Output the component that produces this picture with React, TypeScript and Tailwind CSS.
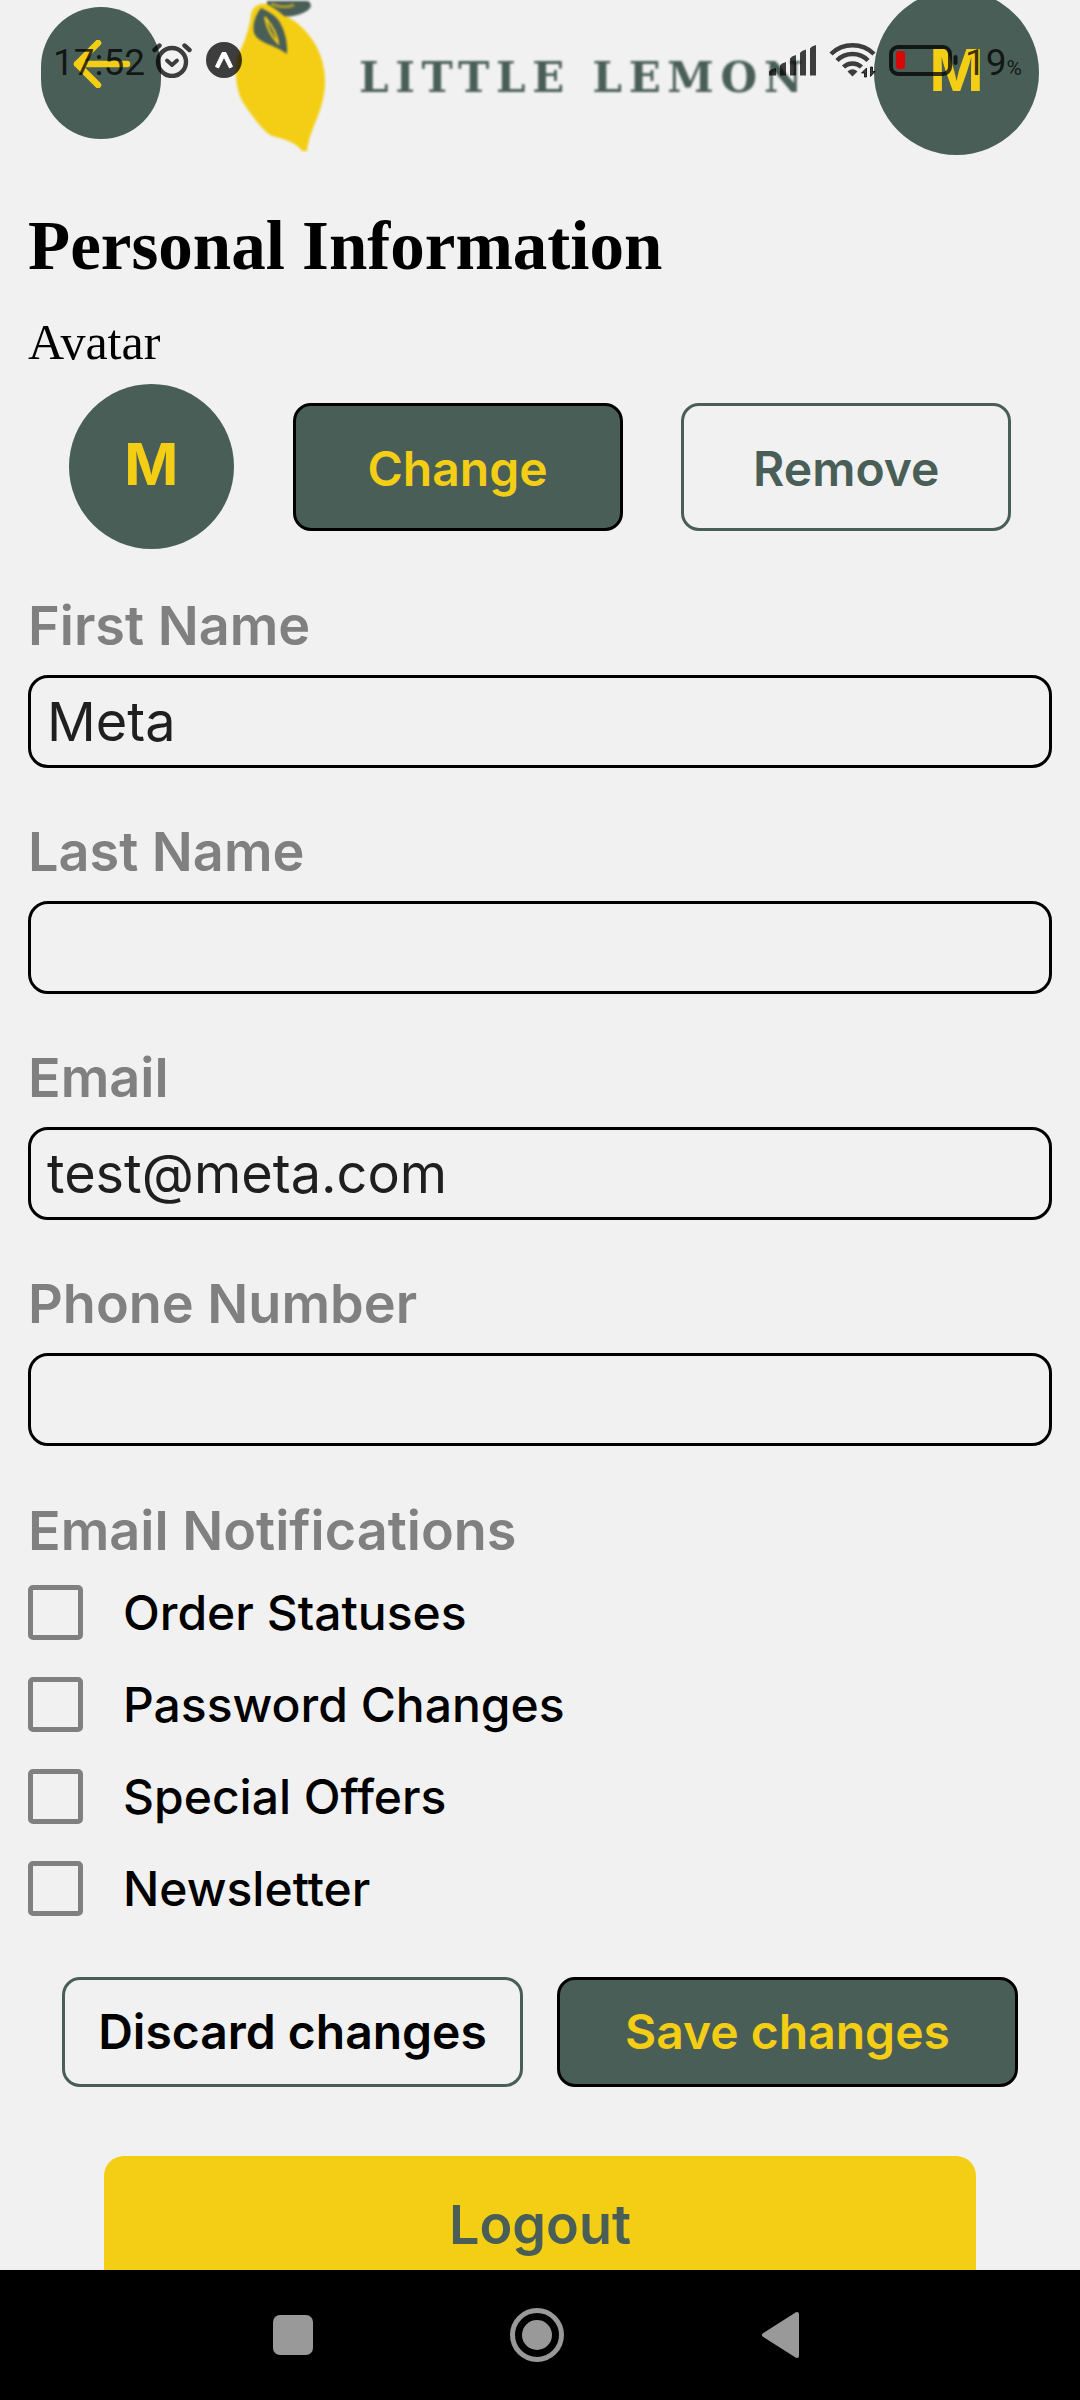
import React, { useState } from "react";

function StatusBar() {
  return (
    <div className="pointer-events-none absolute inset-x-0 top-0 z-10 flex h-30 items-center justify-between pr-[58px] pl-[53px] font-[Roboto,sans-serif] text-[37px] leading-none text-black/75">
      <div className="flex items-center">
        <span className="mt-1 w-[99px]">17:52</span>
        <svg className="h-9 w-10" viewBox="0 0 40 36" fill="none" stroke="currentColor" strokeWidth="4.4" strokeLinecap="round" strokeLinejoin="round" aria-hidden="true">
          <circle cx="20" cy="20" r="14" />
          <path d="M15 18.500l5 4.500 5-4.500" strokeWidth="3.800" />
          <path d="M2.500 8l5-4.500M37.500 8l-5-4.500" />
        </svg>
        <svg className="ml-3.5 h-9 w-9" viewBox="0 0 36 36" aria-hidden="true">
          <circle cx="18" cy="18" r="18" fill="currentColor" />
          <path d="M9.500 24.500L16.200 10.500h3.600L26.500 24.500l-3 1.500L18 15l-5.500 11z" fill="#fff" stroke="#fff" strokeLinejoin="round" />
        </svg>
      </div>
      <div className="flex items-center">
        <svg className="h-9 w-12" viewBox="0 0 48 36" fill="currentColor" aria-hidden="true">
          <path d="M0 33.500V29.500l2-2 5-1.500v7.500zM11 33.500V23.500l2-2 4-1.500v13.500zM21 33.500V16.500l2-2 4-1.500v20.500zM31 33.500V11l2-2 4-1.500v26zM41 33.500V6.500l2-2 4-1.500v30.500z" />
        </svg>
        <svg className="ml-3 h-9 w-12" viewBox="0 0 48 36" fill="none" stroke="currentColor" strokeWidth="4.500" aria-hidden="true">
          <path d="M2 12a31 31 0 0 1 43 0M8 18.500a22 22 0 0 1 31 0M14.500 25a13 13 0 0 1 18 0" />
          <path d="M18.500 29.500q5-4.500 10 0l-5 5z" fill="currentColor" stroke="none" />
          <path d="M37.500 35V26l-5 5h3v4zM41.500 25v9.500l4.500-5h-2.500v-4.500z" fill="currentColor" strokeWidth="1" />
        </svg>
        <svg className="ml-3 h-9 w-[70px]" viewBox="0 0 70 36" aria-hidden="true">
          <rect x="2" y="5" width="59" height="27" rx="7" fill="none" stroke="currentColor" strokeWidth="4" />
          <rect x="7" y="9" width="9" height="18" rx="2.500" fill="#d90808" />
          <rect x="64.500" y="13" width="4" height="10" rx="2" fill="currentColor" />
        </svg>
        <span className="mt-1 ml-1.5 flex items-baseline">
          19<span className="text-[21px]">%</span>
        </span>
      </div>
    </div>
  );
}

function Logo() {
  return (
    <div className="-mr-2 flex items-center pt-1.5 blur-[1px]">
      <svg className="h-[150px] w-[93px]" viewBox="0 0 93 150" aria-hidden="true">
        <path d="M17 14C18 6 24 2 33 3C40 5 46 12 52 15C75 27 91 52 91 80C91 102 83 116 78 130C75 138 74 143 73 150H68C63 143 55 139 38 135C31 132 20 118 10 103C0 88 0 60 6 50C11 40 15 28 17 14Z" fill="#f4ce14" />
        <path d="M33 0H74C80 4 76 9 69 12C62 15 55 16 50 15C45 10 38 6 33 3Z" fill="#495e57" />
        <path d="M27 7C22 13 18 23 20 32C25 43 40 43 53 53C54 40 50 28 45 20C39 12 33 10 27 7Z" fill="#495e57" />
        <path d="M31 16C35 21 43 31 44 42C37 35 33 27 31 16Z" fill="none" stroke="#f4ce14" strokeWidth="2" />
        <path d="M37 3Q50 8 60 4" fill="none" stroke="#a59b33" strokeWidth="3" />
      </svg>
      <span className="ml-8 pt-1 font-['DejaVu_Serif',serif] text-[42px] leading-none font-bold tracking-[0.16em] whitespace-nowrap text-[#495e57]">
        LITTLE LEMON
      </span>
    </div>
  );
}

function Avatar() {
  return (
    <div className="flex size-[165px] shrink-0 items-center justify-center rounded-full bg-[#495e57] pb-1.5 text-[58px] leading-none font-bold text-[#f4ce14]">
      M
    </div>
  );
}

function Field({ id, label, type = "text", initial = "" }: { id: string; label: string; type?: string; initial?: string }) {
  const [value, setValue] = useState(initial);
  return (
    <div className="flex flex-col">
      <label htmlFor={id} className="h-[82px] text-[54px] leading-[66px] font-semibold text-[#808080]">
        {label}
      </label>
      <input
        id={id}
        type={type}
        value={value}
        onChange={(e) => setValue(e.target.value)}
        className="h-[93px] w-full rounded-[20px] border-3 border-black bg-transparent px-4 text-[54px] leading-[66px] font-normal text-[#1f1f1f] outline-none"
      />
    </div>
  );
}

const notifications = ["Order Statuses", "Password Changes", "Special Offers", "Newsletter"];

export default function App() {
  return (
    <div className="relative flex h-screen flex-col overflow-hidden bg-[#f1f1f1] font-[Inter,sans-serif] text-black">
      <StatusBar />
      <main className="min-h-0 flex-1 overflow-hidden">
        <header className="flex h-[145px] items-center justify-between px-[41px]">
          <button type="button" aria-label="Back" className="flex h-[132px] w-[120px] items-center justify-center rounded-[60px] bg-[#495e57] pb-[18px]">
            <svg className="h-12 w-15" viewBox="0 0 60 48" fill="none" stroke="#f4ce14" strokeWidth="6.500" strokeLinecap="round" strokeLinejoin="round" aria-hidden="true">
              <path d="M56 24H6M27 3L6 24L27 45" />
            </svg>
          </button>
          <Logo />
          <Avatar />
        </header>

        <h1 className="mt-[61px] px-7 font-['Liberation_Serif',serif] text-[69px] leading-[80px] font-bold">Personal Information</h1>
        <h2 className="mt-[26px] px-7 font-['Liberation_Serif',serif] text-[50px] leading-[60px]">Avatar</h2>
        <div className="mt-3 flex items-center justify-evenly px-2.5">
          <Avatar />
          <button type="button" className="h-32 w-[330px] rounded-[18px] border-3 border-black bg-[#495e57] pt-1 text-[48px] font-semibold text-[#f4ce14]">
            Change
          </button>
          <button type="button" className="h-32 w-[330px] rounded-[18px] border-3 border-[#495e57] pt-1 text-[48px] font-semibold text-[#495e57]">
            Remove
          </button>
        </div>

        <div className="mt-11 flex flex-col gap-[51px] px-7">
          <Field id="first-name" label="First Name" initial="Meta" />
          <Field id="last-name" label="Last Name" />
          <Field id="email" label="Email" type="email" initial="test@meta.com" />
          <Field id="phone" label="Phone Number" type="tel" />
        </div>

        <fieldset className="mt-[52px] px-7">
          <legend className="text-[54px] leading-[66px] font-semibold text-[#808080]">Email Notifications</legend>
          <div className="mt-[21px] flex flex-col gap-[37px]">
            {notifications.map((name) => (
              <label key={name} className="flex h-[55px] items-center gap-10 text-[48px] leading-none font-medium">
                <input type="checkbox" className="size-[55px] shrink-0 appearance-none rounded-[5px] border-5 border-[#808080] checked:bg-[#495e57]" />
                {name}
              </label>
            ))}
          </div>
        </fieldset>

        <div className="mt-[61px] flex justify-evenly px-7">
          <button type="button" className="h-[110px] w-[461px] rounded-[18px] border-3 border-[#495e57] text-[48px] font-semibold">
            Discard changes
          </button>
          <button type="button" className="h-[110px] w-[461px] rounded-[18px] border-3 border-black bg-[#495e57] text-[48px] font-semibold text-[#f4ce14]">
            Save changes
          </button>
        </div>

        <div className="mt-[69px] px-[104px]">
          <button type="button" className="h-[136px] w-full rounded-[20px] bg-[#f4ce14] text-[54px] font-semibold text-[#495e57]">
            Logout
          </button>
        </div>
      </main>

      <nav className="flex h-[130px] shrink-0 items-center justify-center gap-[188px] bg-black pr-1.5 text-[#999]">
        <button type="button" aria-label="Recent apps">
          <svg className="size-14" viewBox="0 0 56 56" fill="currentColor"><rect x="8" y="8" width="40" height="40" rx="7" /></svg>
        </button>
        <button type="button" aria-label="Home">
          <svg className="size-14" viewBox="0 0 56 56" fill="currentColor">
            <circle cx="28" cy="28" r="24.500" fill="none" stroke="currentColor" strokeWidth="5" />
            <circle cx="28" cy="28" r="15" />
          </svg>
        </button>
        <button type="button" aria-label="Back to previous screen">
          <svg className="size-14" viewBox="0 0 56 56" fill="currentColor" stroke="currentColor" strokeWidth="4" strokeLinejoin="round">
            <path d="M11 28L44 7V49Z" />
          </svg>
        </button>
      </nav>
    </div>
  );
}
